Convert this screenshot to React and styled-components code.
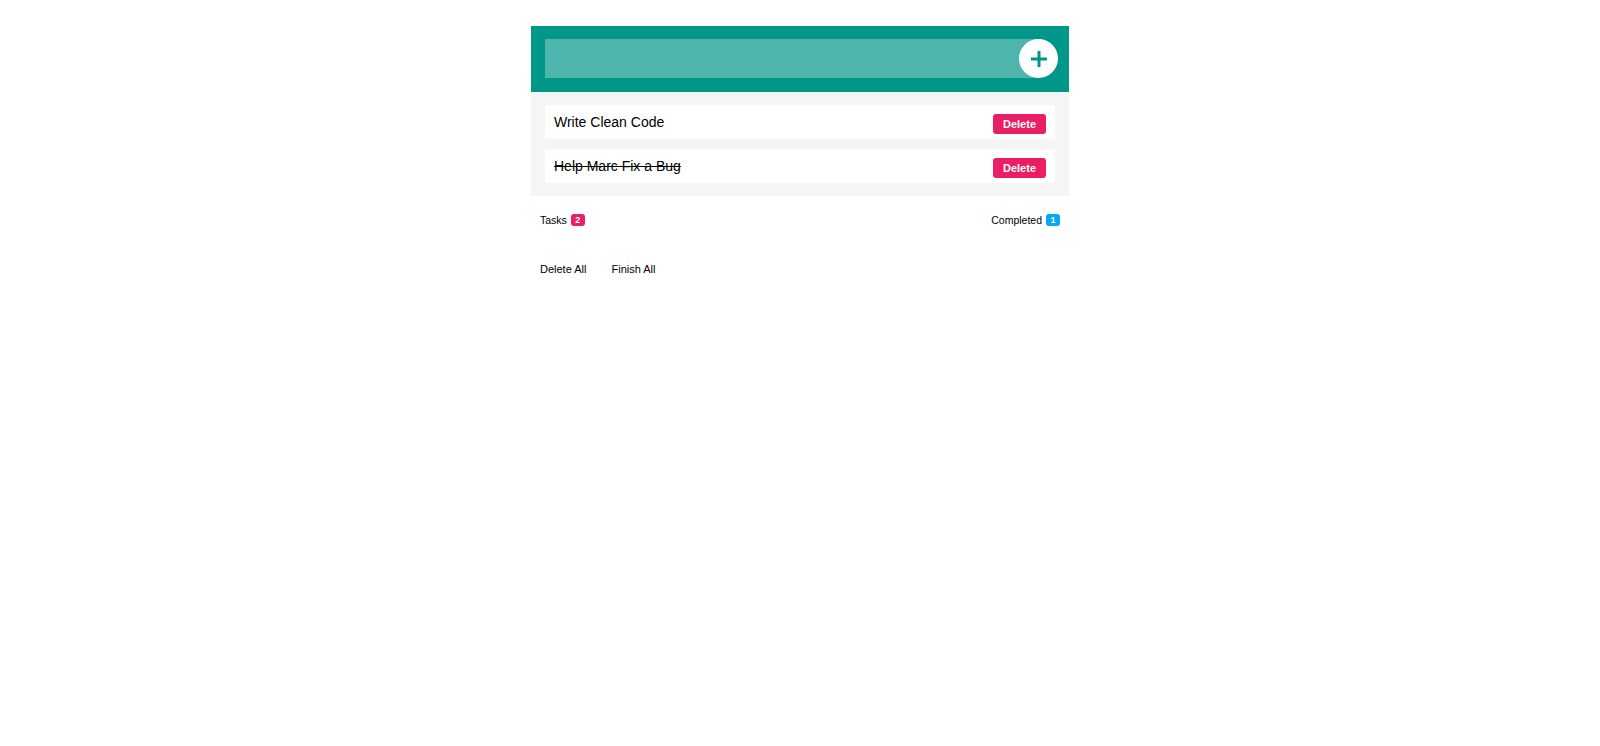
import React from 'react';
import styled, { createGlobalStyle } from 'styled-components';

const GlobalStyle = createGlobalStyle`
  body {
    margin: 0;
    padding-top: 26px;
    background: #fff;
    font-family: "Liberation Sans", Arial, sans-serif;
    color: #000;
  }
`;

const Wrapper = styled.div`
  width: 538px;
  margin: 0 auto;
`;

const Header = styled.form`
  display: flex;
  align-items: center;
  background: #009688;
  padding: 13px 11px 14px 14px;
`;

const Input = styled.input`
  flex: 1;
  height: 39px;
  border: none;
  outline: none;
  margin-right: -19px;
  padding: 0 12px;
  background: rgba(255, 255, 255, 0.3);
  color: #fff;
  font: 14px "Liberation Sans", Arial, sans-serif;
`;

const AddButton = styled.button`
  position: relative;
  width: 39px;
  height: 39px;
  border: none;
  border-radius: 50%;
  background: #fff;
  padding: 0;
  display: flex;
  align-items: center;
  justify-content: center;
  cursor: pointer;
`;

const List = styled.ul`
  list-style: none;
  margin: 0;
  padding: 13px 14px;
  background: #f5f5f5;
  display: flex;
  flex-direction: column;
  gap: 10px;
`;

const Item = styled.li`
  display: flex;
  align-items: center;
  justify-content: space-between;
  height: 34px;
  padding: 0 9px;
  background: #fff;
  font-size: 14px;
`;

const ItemText = styled.span`
  text-decoration: ${({ $done }) => ($done ? 'line-through' : 'none')};
`;

const DeleteButton = styled.button`
  width: 53px;
  height: 20px;
  margin-top: 3px;
  border: none;
  border-radius: 3px;
  background: #e91e63;
  color: #fff;
  font: bold 11px "Liberation Sans", Arial, sans-serif;
  padding: 0;
  cursor: pointer;
`;

const Row = styled.div`
  display: flex;
  align-items: center;
  justify-content: ${({ $spread }) => ($spread ? 'space-between' : 'flex-start')};
  gap: ${({ $spread }) => ($spread ? '0' : '25px')};
  height: 12px;
  margin-top: ${({ $top }) => $top}px;
  padding: 0 9px;
  font-size: ${({ $size }) => $size}px;
`;

const Stat = styled.span`
  display: flex;
  align-items: center;
  gap: 4px;
`;

const Badge = styled.span`
  display: inline-flex;
  align-items: center;
  justify-content: center;
  min-width: 14px;
  height: 12px;
  padding: 0 3px;
  box-sizing: border-box;
  border-radius: 3px;
  background: ${({ $color }) => $color};
  color: #fff;
  font-weight: bold;
  font-size: 9px;
`;

const Action = styled.span`
  cursor: pointer;
`;

const todos = [
  { id: 1, text: 'Write Clean Code', done: false },
  { id: 2, text: 'Help Marc Fix a Bug', done: true },
];

const App = () => (
  <Wrapper>
    <GlobalStyle />
    <Header onSubmit={(e) => e.preventDefault()}>
      <Input type="text" />
      <AddButton type="submit">
        <svg width="18" height="18" viewBox="0 0 18 18">
          <path d="M9 1v16M1 9h16" stroke="#009688" strokeWidth="3" />
        </svg>
      </AddButton>
    </Header>
    <List>
      {todos.map((t) => (
        <Item key={t.id}>
          <ItemText $done={t.done}>{t.text}</ItemText>
          <DeleteButton>Delete</DeleteButton>
        </Item>
      ))}
    </List>
    <Row $spread $top={18} $size={10.5}>
      <Stat>
        Tasks <Badge $color="#e91e63">2</Badge>
      </Stat>
      <Stat>
        Completed <Badge $color="#03a9f4">1</Badge>
      </Stat>
    </Row>
    <Row $top={37} $size={11}>
      <Action>Delete All</Action>
      <Action>Finish All</Action>
    </Row>
  </Wrapper>
);

export default App;
